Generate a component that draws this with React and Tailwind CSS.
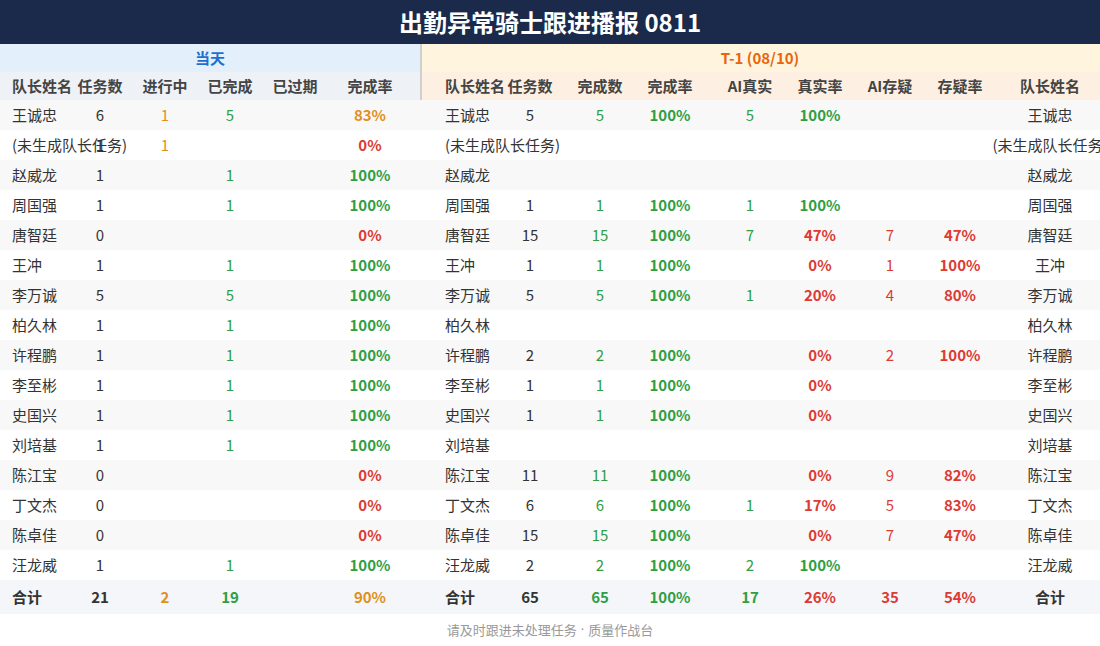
import React from 'react';

const GRID =
  'grid grid-cols-[70px_60px_70px_60px_70px_80px_10px_2px_75px_66px_74px_66px_94px_46px_94px_46px_134px]';

const C = {
  dark: 'text-[#333333]',
  orange: 'text-[#e0901c]',
  green: 'text-[#2f9e44]',
  red: 'text-[#dc3b33]',
};

// left: name, tasks, inProgress, done, expired, rate
// right: tasks, done, rate, aiReal, realRate, aiSus, susRate
const rows = [
  ['王诚忠', '6', '1', '5', '', '83%', '5', '5', '100%', '5', '100%', '', ''],
  ['(未生成队长任务)', '1', '1', '', '', '0%', '', '', '', '', '', '', ''],
  ['赵威龙', '1', '', '1', '', '100%', '', '', '', '', '', '', ''],
  ['周国强', '1', '', '1', '', '100%', '1', '1', '100%', '1', '100%', '', ''],
  ['唐智廷', '0', '', '', '', '0%', '15', '15', '100%', '7', '47%', '7', '47%'],
  ['王冲', '1', '', '1', '', '100%', '1', '1', '100%', '', '0%', '1', '100%'],
  ['李万诚', '5', '', '5', '', '100%', '5', '5', '100%', '1', '20%', '4', '80%'],
  ['柏久林', '1', '', '1', '', '100%', '', '', '', '', '', '', ''],
  ['许程鹏', '1', '', '1', '', '100%', '2', '2', '100%', '', '0%', '2', '100%'],
  ['李至彬', '1', '', '1', '', '100%', '1', '1', '100%', '', '0%', '', ''],
  ['史国兴', '1', '', '1', '', '100%', '1', '1', '100%', '', '0%', '', ''],
  ['刘培基', '1', '', '1', '', '100%', '', '', '', '', '', '', ''],
  ['陈江宝', '0', '', '', '', '0%', '11', '11', '100%', '', '0%', '9', '82%'],
  ['丁文杰', '0', '', '', '', '0%', '6', '6', '100%', '1', '17%', '5', '83%'],
  ['陈卓佳', '0', '', '', '', '0%', '15', '15', '100%', '', '0%', '7', '47%'],
  ['汪龙威', '1', '', '1', '', '100%', '2', '2', '100%', '2', '100%', '', ''],
];

const rateColor = (r) => (r === '100%' ? C.green : r === '0%' ? C.red : C.orange);

const Cell = ({ children, className = '' }) => (
  <div className={`flex items-center justify-center whitespace-nowrap ${className}`}>{children}</div>
);

const Row = ({ r, idx }) => {
  const [name, tasks, prog, done, exp, rate, t2, d2, rate2, aiReal, realRate, aiSus, susRate] = r;
  return (
    <div className={`${GRID} h-[30px] text-[15px] ${idx % 2 === 0 ? 'bg-[#f8f8f8]' : 'bg-white'}`}>
      <div className={`flex items-center pl-3 whitespace-nowrap ${C.dark}`}>{name}</div>
      <Cell className={C.dark}>{tasks}</Cell>
      <Cell className={C.orange}>{prog}</Cell>
      <Cell className={C.green}>{done}</Cell>
      <Cell className={C.dark}>{exp}</Cell>
      <Cell className={`font-bold ${rateColor(rate)}`}>{rate}</Cell>
      <div />
      <div />
      <div className={`flex items-center pl-[23px] whitespace-nowrap ${C.dark}`}>{name}</div>
      <Cell className={C.dark}>{t2}</Cell>
      <Cell className={C.green}>{d2}</Cell>
      <Cell className={`font-bold ${C.green}`}>{rate2}</Cell>
      <Cell className={C.green}>{aiReal}</Cell>
      <Cell className={`font-bold ${realRate === '100%' ? C.green : C.red}`}>{realRate}</Cell>
      <Cell className={C.red}>{aiSus}</Cell>
      <Cell className={`font-bold ${C.red}`}>{susRate}</Cell>
      <Cell className={C.dark}>{name}</Cell>
    </div>
  );
};

const leftHeads = ['任务数', '进行中', '已完成', '已过期', '完成率'];
const rightHeads = ['任务数', '完成数', '完成率', 'AI真实', '真实率', 'AI存疑', '存疑率'];

export default function App() {
  return (
    <div
      className="w-[1100px] h-[646px] overflow-hidden bg-white"
      style={{ fontFamily: '"Noto Sans CJK SC", "Noto Sans", sans-serif' }}
    >
      {/* Title bar */}
      <div className="h-[44px] bg-[#1b2a4b] flex items-center justify-center">
        <h1 className="text-white text-[24px] font-bold">出勤异常骑士跟进播报 0811</h1>
      </div>

      <div className="w-[1117px]">
        {/* Section header */}
        <div className={`${GRID} h-[28px] text-[15px] font-bold`}>
          <div className="col-span-7 bg-[#e3f0fc] flex items-center justify-center text-[#1f6fd1]">当天</div>
          <div className="bg-[#cfcfcf]" />
          <div className="col-span-9 bg-[#fff5df] flex items-center justify-center pr-[19px] text-[#e8650e]">
            T-1 (08/10)
          </div>
        </div>

        {/* Column header - background on the row so long labels can spill over */}
        <div
          className={`${GRID} h-[28px] text-[15px] font-bold text-[#444444] bg-[linear-gradient(to_right,#eef1f6_420px,#cfcfcf_420px,#cfcfcf_422px,#fdf0e2_422px)]`}
        >
          <div className="flex items-center pl-3 whitespace-nowrap">队长姓名</div>
          {leftHeads.map((h) => (
            <Cell key={h}>{h}</Cell>
          ))}
          <div />
          <div />
          <div className="flex items-center pl-[23px] whitespace-nowrap">队长姓名</div>
          {rightHeads.map((h) => (
            <Cell key={h}>{h}</Cell>
          ))}
          <Cell>队长姓名</Cell>
        </div>

        {rows.map((r, i) => (
          <Row key={i} r={r} idx={i} />
        ))}

        {/* Total */}
        <div className={`${GRID} h-[34px] text-[15px] font-bold bg-[#f4f6fa]`}>
          <div className={`flex items-center pl-3 ${C.dark}`}>合计</div>
          <Cell className={C.dark}>21</Cell>
          <Cell className={C.orange}>2</Cell>
          <Cell className={C.green}>19</Cell>
          <Cell />
          <Cell className={C.orange}>90%</Cell>
          <div />
          <div />
          <div className={`flex items-center pl-[23px] ${C.dark}`}>合计</div>
          <Cell className={C.dark}>65</Cell>
          <Cell className={C.green}>65</Cell>
          <Cell className={C.green}>100%</Cell>
          <Cell className={C.green}>17</Cell>
          <Cell className={C.red}>26%</Cell>
          <Cell className={C.red}>35</Cell>
          <Cell className={C.red}>54%</Cell>
          <Cell className={C.dark}>合计</Cell>
        </div>
      </div>

      <div className="w-[1100px] h-[32px] flex items-center justify-center text-[13px] text-[#999999]">
        请及时跟进未处理任务<span className="font-['Noto_Sans'] px-1">·</span>质量作战台
      </div>
    </div>
  );
}
